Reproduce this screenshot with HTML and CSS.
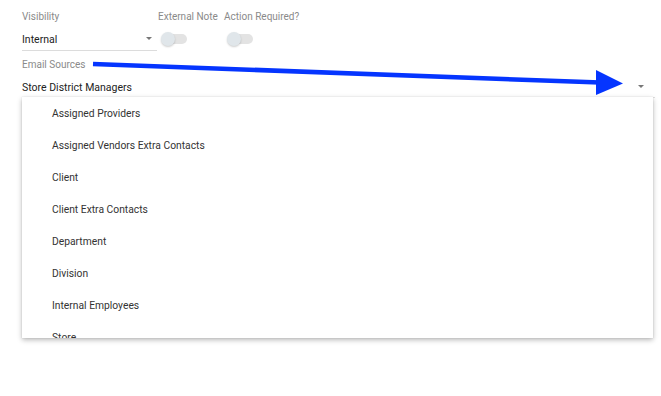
FILE: index.html
```html
<!DOCTYPE html>
<html>
<head>
    <meta charset="UTF-8">
    <title>Email Sources</title>
    <link rel="stylesheet" href="styles.css">
</head>
<body>
    <div class="form">
        <!-- first row -->
        <div class="row">
            <div class="field visibility">
                <span class="label">Visibility</span>
                <div class="select">
                    <span class="value">Internal</span>
                    <span class="caret"></span>
                </div>
            </div>
            <div class="field switch-field">
                <span class="label">External Note</span>
                <div class="switch"><span class="knob"></span></div>
            </div>
            <div class="field switch-field">
                <span class="label">Action Required?</span>
                <div class="switch"><span class="knob"></span></div>
            </div>
        </div>
        <!-- email sources -->
        <div class="field sources">
            <span class="label">Email Sources</span>
            <div class="select">
                <span class="value">Store District Managers</span>
                <span class="caret"></span>
            </div>
        </div>
    </div>

    <div class="menu">
        <div class="item">Assigned Providers</div>
        <div class="item">Assigned Vendors Extra Contacts</div>
        <div class="item">Client</div>
        <div class="item">Client Extra Contacts</div>
        <div class="item">Department</div>
        <div class="item">Division</div>
        <div class="item">Internal Employees</div>
        <div class="item">Store</div>
    </div>

    <svg class="annotation" width="661" height="396" viewBox="0 0 661 396">
        <line x1="93" y1="64" x2="600" y2="82.5" stroke="#0535ff" stroke-width="4.5" />
        <polygon points="596,70 623,83.5 596,95" fill="#0535ff" />
    </svg>
</body>
</html>
```

FILE: styles.css
```css
html, body {
    margin: 0;
    height: 100%;
    background: #fff;
}

body {
    position: relative;
    font-family: Roboto, "Liberation Sans", Arial, sans-serif;
    color: #222;
}

.form {
    padding: 11px 6px 0 22px;
}

.row {
    display: flex;
    align-items: flex-start;
}

.field {
    display: flex;
    flex-direction: column;
}

.label {
    font-size: 10px;
    color: #8a8a8a;
    line-height: 12px;
    white-space: nowrap;
}

.select {
    display: flex;
    align-items: center;
    justify-content: space-between;
    height: 23px;
    border-bottom: 1px solid #dcdcdc;
    margin-top: 4px;
}

.value {
    font-size: 10.5px;
    color: #222;
    padding-top: 1px;
}

.caret {
    width: 0;
    height: 0;
    border-left: 3.5px solid transparent;
    border-right: 3.5px solid transparent;
    border-top: 3.5px solid #777;
    margin-right: 5px;
}

.visibility {
    width: 135px;
}

.switch-field {
    margin-left: 1px;
    width: 65px;
}

.switch {
    position: relative;
    width: 24px;
    height: 10px;
    border-radius: 5px;
    background: #e3e3e3;
    margin: 11px 0 0 5px;
}

.knob {
    position: absolute;
    left: -2px;
    top: -2px;
    width: 14px;
    height: 14px;
    border-radius: 50%;
    background: #e0e6ea;
    box-shadow: 0 1px 2px rgba(0, 0, 0, 0.2);
}

.sources {
    margin-top: 8px;
}

.sources .select {
    margin-top: 5px;
    height: 21px;
    width: 633px;
    border-bottom-color: #e2e2e2;
}

.sources .caret {
    margin-right: 11px;
}

.menu {
    position: absolute;
    z-index: 2;
    top: 97px;
    left: 22px;
    width: 631px;
    height: 241px;
    background: #fff;
    overflow: hidden;
    box-shadow: 0 2px 5px rgba(0, 0, 0, 0.28), 0 0 1px rgba(0, 0, 0, 0.15);
}

.item {
    height: 32px;
    line-height: 32px;
    padding-left: 30px;
    padding-top: 1px;
    margin-bottom: -1px;
    font-size: 10.3px;
    color: #333;
}

.annotation {
    position: absolute;
    z-index: 3;
    top: 0;
    left: 0;
    pointer-events: none;
}
```
